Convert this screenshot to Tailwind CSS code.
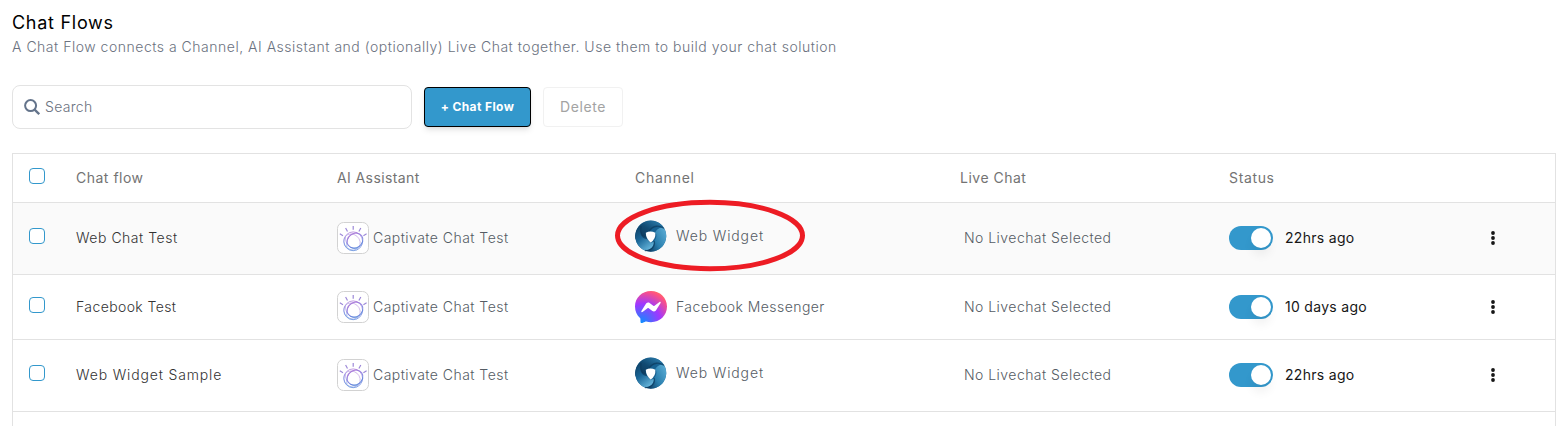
<!DOCTYPE html>
<html lang="en">
<head>
<meta charset="utf-8">
<title>Chat Flows</title>
<script src="https://cdn.jsdelivr.net/npm/@tailwindcss/browser@4"></script>
</head>
<body class="relative h-[438px] overflow-hidden bg-white pl-3 pr-[3px] font-['Inter',sans-serif] text-sm">
<svg width="0" height="0" class="absolute">
  <defs>
    <linearGradient id="gw" x1="0" y1="0" x2="0" y2="1"><stop offset="0" stop-color="#a873d6"/><stop offset=".55" stop-color="#8b83e0"/><stop offset="1" stop-color="#4a80d8"/></linearGradient>
    <radialGradient id="gm" cx=".2" cy="1" r="1.1"><stop offset="0" stop-color="#0a90ff"/><stop offset=".55" stop-color="#a037ff"/><stop offset=".92" stop-color="#ff5280"/><stop offset="1" stop-color="#ff6b68"/></radialGradient>
    <linearGradient id="ga" x1="0" y1="1" x2="1" y2="0"><stop offset="0" stop-color="#0c3454"/><stop offset=".5" stop-color="#114a72"/><stop offset="1" stop-color="#2f86b8"/></linearGradient>
    <linearGradient id="gb" x1="0" y1="0" x2=".6" y2="1"><stop offset="0" stop-color="#0d3c60"/><stop offset=".5" stop-color="#1a6697"/><stop offset="1" stop-color="#61b0d6"/></linearGradient>
    <linearGradient id="gc" x1="1" y1="0" x2="0" y2=".6"><stop offset="0" stop-color="#5fb0d8"/><stop offset=".6" stop-color="#2a7fae"/><stop offset="1" stop-color="#0e4269"/></linearGradient>
    <symbol id="watson" viewBox="0 0 32 32">
      <rect x=".5" y=".5" width="31" height="31" rx="6" fill="#fff" stroke="#d2d2d2"/>
      <g fill="none" stroke="url(#gw)">
        <circle cx="16.2" cy="19.300" r="9.400" stroke-width="1" opacity=".7"/>
        <ellipse cx="18" cy="18.600" rx="8.200" ry="7.200" transform="rotate(-35 18 18.600)" stroke-width="1.100" opacity=".9"/>
        <ellipse cx="15" cy="20" rx="8.600" ry="7.600" transform="rotate(40 15 20)" stroke-width=".8" opacity=".55"/>
        <path d="M8.500 15C8 22 13 27 20.500 26.500M10 25C8.500 18 12 12 20 10.800" stroke-width=".8" opacity=".6"/>
      </g>
      <path d="M16.200 4v3.800M8.600 6l1.900 3.500M23.800 6l-1.900 3.500M2.800 11.800l3.200 1.900M29.600 11.800l-3.200 1.900" stroke="#9c88d8" stroke-width="1.200"/>
    </symbol>
    <symbol id="widget" viewBox="0 0 32 32">
      <circle cx="15.700" cy="16" r="15.500" fill="#176191"/>
      <path d="M.6 19A15.500 15.500 0 0 1 29 8C24 5.500 17 6 14 11.500C11 12 10 14 11.500 18C7 15 3 16 .6 19Z" fill="url(#ga)"/>
      <path d="M.6 19C0 13 2 8 6 6C4.500 13 7 18 12 18.500C13 22 16 23.500 19 21.500C19 27 15 31 10 30.500A15.500 15.500 0 0 1 .6 19Z" fill="url(#gb)"/>
      <path d="M29 8A15.500 15.500 0 0 1 10 30.500C16 30 20 26 19 21C22 18 22 14 20 12.500C22 9 25 7 29 8Z" fill="url(#gc)"/>
      <path d="M6 6C4.500 13 7 18 12 18.500M14 11.500C18 5 25 5 29 8.500M19 21C21 27 15 31 10 30.500" fill="none" stroke="#0b385b" stroke-width="1.300" opacity=".65"/>
      <path d="M10.800 12.800Q15.500 10 20.300 12.800Q21 19 15.700 22.500Q11 19 10.800 12.800Z" fill="#fff"/>
    </symbol>
    <symbol id="messenger" viewBox="0 0 32 32">
      <path d="M16 0C7 0 0 6.600 0 15.500c0 4.700 1.900 8.700 5 11.500c.4.400.4.800.4 1.300l.1 2.600c0 .9.900 1.400 1.700 1.100l3-1.300c.4-.2.600-.2 1-.1c1.500.4 3.100.6 4.800.6c9 0 16-6.700 16-15.600S25 0 16 0Z" fill="url(#gm)"/>
      <path d="M6.400 20l4.700-7.400c.8-1.200 2.400-1.500 3.500-.7l3.700 2.800c.3.300.8.300 1.200 0l5-3.800c.7-.5 1.500.3 1.100 1L20.900 19.400c-.8 1.200-2.400 1.500-3.500.7l-3.700-2.800c-.3-.3-.8-.3-1.200 0l-5 3.800c-.7.500-1.600-.4-1.100-1.100Z" fill="#fff"/>
    </symbol>
    <symbol id="dots" viewBox="0 0 4 14"><circle cx="2" cy="2" r="1.900" fill="#161616"/><circle cx="2" cy="7" r="1.900" fill="#161616"/><circle cx="2" cy="12" r="1.900" fill="#161616"/></symbol>
  </defs>
</svg>

<h1 class="pt-[11px] text-lg leading-6 tracking-[0.72px] text-black">Chat Flows</h1>
<p class="mt-0.5 whitespace-nowrap font-light leading-5 tracking-[0.51px] text-[#6b7280]">A Chat Flow connects a Channel, AI Assistant and (optionally) Live Chat together. Use them to build your chat solution</p>

<div class="mt-7 flex h-11 items-center">
  <div class="flex h-11 w-[400px] items-center rounded-lg border border-[#e3e3e3] pl-[11px]">
    <svg class="h-4 w-4" viewBox="0 0 16 16" fill="none" stroke="#64748b" stroke-width="2"><circle cx="6.600" cy="6.600" r="5.500"/><path d="M10.600 10.600L15.200 15.200" stroke-width="2.300"/></svg>
    <span class="ml-[5px] font-light tracking-[0.3px] text-[#6b7280]">Search</span>
  </div>
  <button class="ml-3 h-10 w-[107px] rounded border border-black bg-[#3398cc] text-xs font-bold tracking-[0.4px] text-white shadow-md">+ Chat Flow</button>
  <button class="ml-3 h-10 w-20 rounded border border-[#f1f1f1] tracking-[0.6px] text-[#a3a3a3]">Delete</button>
</div>

<div class="mt-6 h-[273px] w-[1544px] border-x border-t border-[#e2e2e2] font-light tracking-[0.46px] text-[#555c64]">
  <div class="grid h-[49px] grid-cols-[47px_261px_298px_325px_269px_256px_1fr] items-center border-b border-[#e2e2e2] pl-4 font-normal tracking-[0.5px] text-[#737373]">
    <span class="mb-1 h-4 w-4 rounded border border-[#3398cc] bg-white"></span><span>Chat flow</span><span class="tracking-[0.4px]">AI Assistant</span><span class="tracking-[0.75px]">Channel</span><span>Live Chat</span><span class="tracking-[0.65px]">Status</span>
  </div>
  <div class="grid h-[72px] grid-cols-[47px_261px_298px_325px_269px_262px_1fr] items-center border-b border-[#e2e2e2] bg-[#fafafa] pb-px pl-4">
    <span class="mb-1 h-4 w-4 rounded border border-[#3398cc] bg-white"></span>
    <span class="tracking-[0.52px] text-[#333]">Web Chat Test</span>
    <span class="flex items-center gap-1"><svg class="h-8 w-8"><use href="#watson"/></svg><span>Captivate Chat Test</span></span>
    <span class="mb-1 flex items-center gap-[9px]"><svg class="h-8 w-8"><use href="#widget"/></svg><span class="tracking-[0.87px]">Web Widget</span></span>
    <span class="pl-1">No Livechat Selected</span>
    <span class="flex items-center gap-3 font-normal tracking-[0.3px] text-[#161616]"><span class="flex h-6 w-11 items-center justify-end rounded-full bg-[#3398cc] pr-0.5"><span class="h-5 w-5 rounded-full bg-white shadow-[0_8px_10px_rgba(0,0,0,0.05)]"></span></span><span>22hrs ago</span></span>
    <svg class="h-3.5 w-1"><use href="#dots"/></svg>
  </div>
  <div class="grid h-[65px] grid-cols-[47px_261px_298px_325px_269px_262px_1fr] items-center border-b border-[#e2e2e2] pl-4">
    <span class="mb-1 h-4 w-4 rounded border border-[#3398cc] bg-white"></span>
    <span class="tracking-[0.4px] text-[#333]">Facebook Test</span>
    <span class="flex items-center gap-1"><svg class="h-8 w-8"><use href="#watson"/></svg><span>Captivate Chat Test</span></span>
    <span class="flex items-center gap-[9px]"><svg class="h-8 w-8"><use href="#messenger"/></svg><span class="tracking-[0.43px]">Facebook Messenger</span></span>
    <span class="pl-1">No Livechat Selected</span>
    <span class="flex items-center gap-3 font-normal tracking-[0.3px] text-[#161616]"><span class="flex h-6 w-11 items-center justify-end rounded-full bg-[#3398cc] pr-0.5"><span class="h-5 w-5 rounded-full bg-white shadow-[0_8px_10px_rgba(0,0,0,0.05)]"></span></span><span>10 days ago</span></span>
    <svg class="h-3.5 w-1"><use href="#dots"/></svg>
  </div>
  <div class="grid h-[72px] grid-cols-[47px_261px_298px_325px_269px_262px_1fr] items-center border-b border-[#e2e2e2] pb-px pl-4">
    <span class="mb-1 h-4 w-4 rounded border border-[#3398cc] bg-white"></span>
    <span class="tracking-[0.85px] text-[#333]">Web Widget Sample</span>
    <span class="flex items-center gap-1"><svg class="h-8 w-8"><use href="#watson"/></svg><span>Captivate Chat Test</span></span>
    <span class="mb-1 flex items-center gap-[9px]"><svg class="h-8 w-8"><use href="#widget"/></svg><span class="tracking-[0.87px]">Web Widget</span></span>
    <span class="pl-1">No Livechat Selected</span>
    <span class="flex items-center gap-3 font-normal tracking-[0.3px] text-[#161616]"><span class="flex h-6 w-11 items-center justify-end rounded-full bg-[#3398cc] pr-0.5"><span class="h-5 w-5 rounded-full bg-white shadow-[0_8px_10px_rgba(0,0,0,0.05)]"></span></span><span>22hrs ago</span></span>
    <svg class="h-3.5 w-1"><use href="#dots"/></svg>
  </div>
</div>

<svg class="pointer-events-none absolute left-[614px] top-[199px] h-[73px] w-[192px]" viewBox="0 0 192 73"><ellipse cx="96" cy="36.500" rx="92.500" ry="33.200" fill="none" stroke="#ed1c24" stroke-width="5"/></svg>
</body>
</html>
